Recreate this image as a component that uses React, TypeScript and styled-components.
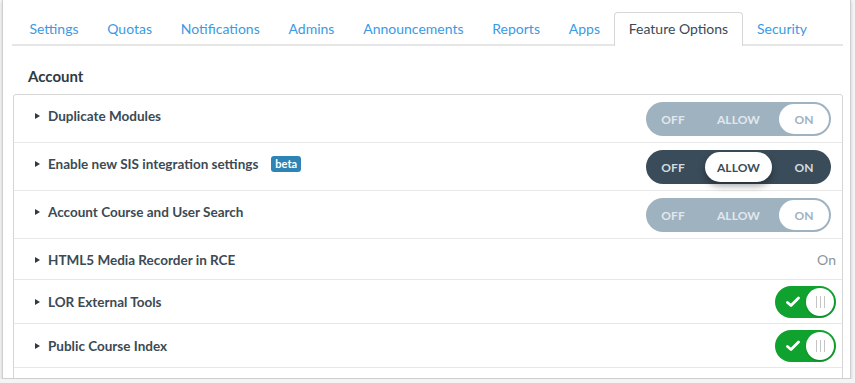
import styled, { createGlobalStyle } from "styled-components";

const GlobalStyle = createGlobalStyle`
  html, body {
    margin: 0;
    padding: 0;
    background: #f4f4f4;
  }
  body {
    font-family: Lato, "Open Sans", "Liberation Sans", sans-serif;
    color: #2d3b45;
  }
`;

const Frame = styled.div`
  box-sizing: border-box;
  margin: 0 4px 0 2px;
  height: 379px;
  overflow: hidden;
  background: #fff;
  border: 1px solid #cfcfcf;
  border-top: none;
  box-shadow: 0 2px 3px rgba(0, 0, 0, 0.18);
  padding: 12px 7px 0 9px;
`;

const TabBar = styled.ul`
  display: flex;
  list-style: none;
  margin: 0;
  padding: 0 0 0 3px;
  border-bottom: 2px solid #e6e6e6;
`;

const Tab = styled.li<{ $active?: boolean }>`
  box-sizing: border-box;
  padding: 0 13.4px;
  display: flex;
  align-items: center;
  font-size: 14px;
  color: ${(p) => (p.$active ? "#3b4a54" : "#3a9ae3")};
  background: #fff;
  border: 1px solid ${(p) => (p.$active ? "#d7d7d7" : "transparent")};
  border-bottom: none;
  border-radius: 4px 4px 0 0;
  margin-bottom: ${(p) => (p.$active ? "-2px" : "0")};
  height: ${(p) => (p.$active ? "34px" : "32px")};
  padding-bottom: ${(p) => (p.$active ? "2px" : "0")};
`;

const Heading = styled.h2`
  margin: 0;
  padding: 21px 0 0 16px;
  height: 27px;
  font-size: 15px;
  font-weight: 700;
  color: #2d3b45;
`;

const Table = styled.div`
  margin: 0 0 0 1px;
  border: 1px solid #d6d6d6;
  border-radius: 3px;
`;

const Row = styled.div`
  display: flex;
  align-items: center;
  justify-content: space-between;
  min-height: 27px;
  padding: 7px 11px 6px 21px;
  border-bottom: 1px solid #e8e8e8;
`;

const Label = styled.div<{ $raised?: boolean }>`
  display: flex;
  align-items: center;
  gap: 8px;
  font-size: 13.5px;
  font-weight: 700;
  color: #3b4a54;
  padding-bottom: ${(p) => (p.$raised ? "6px" : "0")};
`;

const Caret = styled.span`
  width: 0;
  height: 0;
  border-left: 5px solid #2d3b45;
  border-top: 3.5px solid transparent;
  border-bottom: 3.5px solid transparent;
`;

const Badge = styled.span`
  margin-left: 5px;
  padding: 1px 4px 2px;
  border-radius: 3px;
  background: #2f84b6;
  color: #fff;
  font-size: 11px;
  font-weight: 700;
`;

const Pill = styled.div<{ $dark?: boolean }>`
  box-sizing: border-box;
  width: 185px;
  height: 34px;
  border-radius: 17px;
  padding: 2px;
  display: grid;
  grid-template-columns: 50px 1fr 50px;
  background: ${(p) => (p.$dark ? "#3a4c59" : "#9fb2c0")};
`;

const Segment = styled.div`
  display: flex;
  justify-content: center;
  align-items: center;
`;

const SegmentText = styled.span<{ $active?: boolean; $dark?: boolean }>`
  box-sizing: border-box;
  min-width: 50px;
  height: 30px;
  padding: 0 12px;
  display: flex;
  align-items: center;
  justify-content: center;
  border-radius: 15px;
  font-size: 12px;
  font-weight: 700;
  letter-spacing: 0.1px;
  background: ${(p) => (p.$active ? "#fff" : "transparent")};
  box-shadow: ${(p) =>
    p.$active && p.$dark ? "0 4px 7px rgba(0, 0, 0, 0.35)" : "none"};
  color: ${(p) =>
    p.$active
      ? p.$dark
        ? "#3a4c59"
        : "#9fb2c0"
      : p.$dark
        ? "#d3dce2"
        : "#e1e8ed"};
`;

const StateText = styled.span`
  font-size: 14px;
  color: #8a959d;
  margin-right: -5px;
`;

const Switch = styled.div`
  box-sizing: border-box;
  width: 61px;
  height: 32px;
  border-radius: 16px;
  background: #10a22e;
  padding: 2px;
  display: flex;
  align-items: center;
  justify-content: space-between;
  margin: -1px -5px -1px 0;
`;

const Knob = styled.div`
  width: 28px;
  height: 28px;
  border-radius: 50%;
  background: #fff;
  display: flex;
  align-items: center;
  justify-content: center;
  gap: 3px;
  box-shadow: 0 1px 2px rgba(0, 0, 0, 0.2);
`;

const Grip = styled.span`
  width: 1px;
  height: 12px;
  background: #c4c4c4;
`;

function Check() {
  return (
    <svg width="14" height="12" viewBox="0 0 14 12" style={{ marginLeft: 9 }}>
      <path
        d="M1.5 6.5 L5 9.5 L12.5 2"
        fill="none"
        stroke="#fff"
        strokeWidth="2.8"
        strokeLinecap="round"
        strokeLinejoin="round"
      />
    </svg>
  );
}

function ThreeWay({ value, dark }: { value: string; dark?: boolean }) {
  return (
    <Pill $dark={dark}>
      {["OFF", "ALLOW", "ON"].map((opt) => (
        <Segment key={opt}>
          <SegmentText $active={opt === value} $dark={dark}>
            {opt}
          </SegmentText>
        </Segment>
      ))}
    </Pill>
  );
}

function GreenSwitch() {
  return (
    <Switch>
      <Check />
      <Knob>
        <Grip />
        <Grip />
        <Grip />
      </Knob>
    </Switch>
  );
}

const tabs = [
  "Settings",
  "Quotas",
  "Notifications",
  "Admins",
  "Announcements",
  "Reports",
  "Apps",
  "Feature Options",
  "Security",
];

export default function App() {
  return (
    <>
      <GlobalStyle />
      <Frame>
        <TabBar>
          {tabs.map((t) => (
            <Tab key={t} $active={t === "Feature Options"}>
              {t}
            </Tab>
          ))}
        </TabBar>
        <Heading>Account</Heading>
        <Table>
          <Row>
            <Label $raised>
              <Caret />
              Duplicate Modules
            </Label>
            <ThreeWay value="ON" />
          </Row>
          <Row>
            <Label $raised>
              <Caret />
              Enable new SIS integration settings
              <Badge>beta</Badge>
            </Label>
            <ThreeWay value="ALLOW" dark />
          </Row>
          <Row>
            <Label $raised>
              <Caret />
              Account Course and User Search
            </Label>
            <ThreeWay value="ON" />
          </Row>
          <Row>
            <Label>
              <Caret />
              HTML5 Media Recorder in RCE
            </Label>
            <StateText>On</StateText>
          </Row>
          <Row>
            <Label>
              <Caret />
              LOR External Tools
            </Label>
            <GreenSwitch />
          </Row>
          <Row>
            <Label>
              <Caret />
              Public Course Index
            </Label>
            <GreenSwitch />
          </Row>
          <Row />
        </Table>
      </Frame>
    </>
  );
}
